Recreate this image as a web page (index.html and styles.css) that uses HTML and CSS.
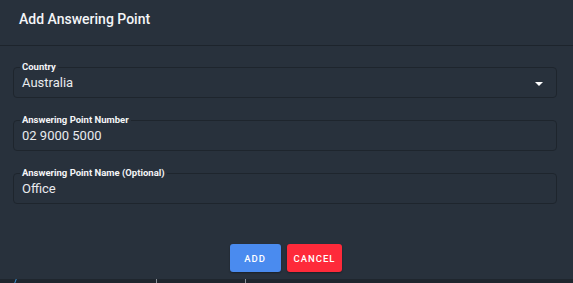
FILE: index.html
```html
<!DOCTYPE html>
<html lang="en">
<head>
<meta charset="utf-8">
<title>Add Answering Point</title>
<link rel="stylesheet" href="styles.css">
</head>
<body>
<div class="dialog">
  <header class="dialog-header">
    <h1 class="dialog-title">Add Answering Point</h1>
  </header>
  <div class="dialog-body">
    <fieldset class="field">
      <legend class="field-label">Country</legend>
      <div class="field-row">
        <span class="field-value">Australia</span>
        <svg class="dropdown-arrow" width="8" height="4" viewBox="0 0 8 4"><polygon points="0,0 8,0 4,4" fill="#ffffff"/></svg>
      </div>
    </fieldset>
    <fieldset class="field">
      <legend class="field-label">Answering Point Number</legend>
      <div class="field-row">
        <span class="field-value">02 9000 5000</span>
      </div>
    </fieldset>
    <fieldset class="field">
      <legend class="field-label">Answering Point Name (Optional)</legend>
      <div class="field-row">
        <span class="field-value">Office</span>
      </div>
    </fieldset>
  </div>
  <div class="dialog-actions">
    <button class="btn btn-add">ADD</button>
    <button class="btn btn-cancel">CANCEL</button>
  </div>
  <div class="under-strip">
    <span class="tick tick-blue"></span>
    <span class="tick tick-gray tick-2"></span>
    <span class="tick tick-gray tick-3"></span>
  </div>
</div>
</body>
</html>
```

FILE: styles.css
```css
html, body {
  margin: 0;
  padding: 0;
  background: #28313c;
}

body {
  width: 573px;
  height: 283px;
  overflow: hidden;
  font-family: Roboto, "Liberation Sans", Arial, sans-serif;
  color: #eef0f2;
}

.dialog {
  display: flex;
  flex-direction: column;
  height: 283px;
}

.dialog-header {
  padding: 9px 19px 16px;
  border-bottom: 1px solid #1d242c;
}

.dialog-title {
  margin: 0;
  font-size: 14px;
  line-height: 20px;
  font-weight: 500;
  color: #f4f5f7;
}

.dialog-body {
  display: flex;
  flex-direction: column;
  gap: 17px;
  padding: 16px 16px 0 13px;
}

.field {
  margin: 0;
  padding: 0 8px 6px;
  border: 1px solid #1e252d;
  border-radius: 4px;
  min-width: 0;
}

.field-label {
  margin-left: -2px;
  padding: 0 2px;
  font-size: 9.5px;
  line-height: 10px;
  font-weight: 700;
  color: #f4f5f7;
}

.field-row {
  display: flex;
  align-items: center;
  justify-content: space-between;
  margin-top: 3px;
  height: 16px;
}

.field-value {
  font-size: 13px;
  line-height: 16px;
  color: #e9ebee;
}

.dropdown-arrow {
  margin-right: 5px;
  margin-top: 1px;
}

.dialog-actions {
  display: flex;
  justify-content: center;
  gap: 6px;
  margin-top: 40px;
  padding-right: 1px;
}

.btn {
  min-width: 51px;
  height: 28px;
  padding: 0 7px;
  border: none;
  border-radius: 3px;
  font-family: Roboto, "Liberation Sans", Arial, sans-serif;
  font-size: 9.5px;
  font-weight: 500;
  letter-spacing: 1px;
  color: #ffffff;
  box-shadow: 0 1px 2px rgba(0, 0, 0, 0.35);
}

.btn-add {
  background: #4a8bef;
}

.btn-cancel {
  background: #fe2a3a;
}

.under-strip {
  margin-top: auto;
  height: 4px;
  background: #1f262e;
  display: flex;
  align-items: flex-start;
}

.tick {
  display: block;
  width: 1px;
  height: 4px;
}

.tick-blue {
  margin-left: 15px;
  background: #3a8fd0;
  transform: skewX(-20deg);
}

.tick-gray {
  background: #8a9098;
}

.tick-2 {
  margin-left: 140px;
}

.tick-3 {
  margin-left: 88px;
}
```
